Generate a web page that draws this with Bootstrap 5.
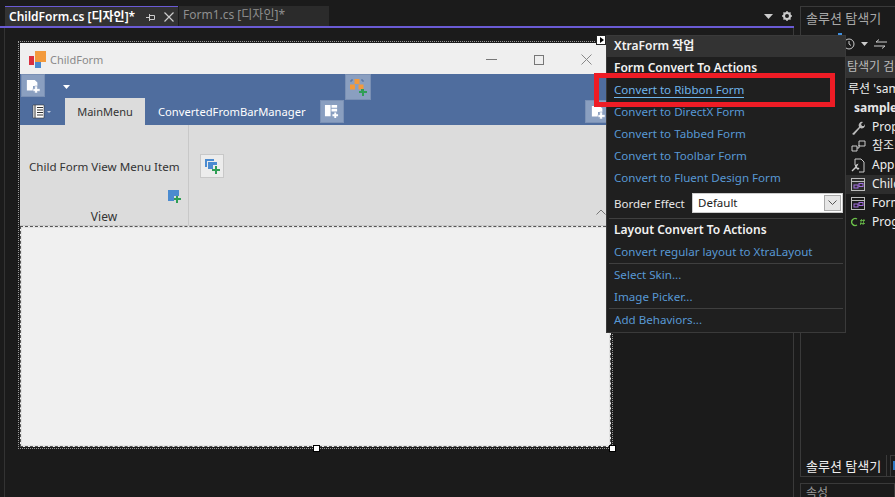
<!DOCTYPE html>
<html lang="ko">
<head>
    <meta charset="UTF-8">
    <title>ChildForm.cs [디자인]</title>
    <link href="https://cdn.jsdelivr.net/npm/bootstrap@5.3.0/dist/css/bootstrap.min.css" rel="stylesheet">
    <style>
        html, body { height: 100%; }
        body {
            background: #1b1b1b;
            color: #e6e6e6;
            font-family: "Noto Sans", "Noto Sans CJK KR", sans-serif;
            font-size: 12px;
            line-height: 1.2;
            overflow: hidden;
        }
        .ide-root { position: relative; width: 895px; height: 497px; }

        /* document column */
        .doc-col { width: 794px; flex: none; }
        .doc-tabs { height: 28px; padding: 6px 0 0 5px; border-bottom: 2px solid #6a5bd4; position: relative; }
        .doc-tab { height: 20px; padding: 0 4px; line-height: 18px; white-space: nowrap; }
        .doc-tab-on { width: 173px; background: #333; border-top: 1px solid #6a5bd4; color: #fff; font-weight: 600; }
        .doc-tab-off { width: 150px; margin-left: 1px; background: #2b2b2b; color: #8f8f8f; }
        .tab-tools { position: absolute; right: 2px; top: 11px; gap: 9px; }
        .canvas-area { height: 469px; margin-left: 4px; border-left: 1px solid #333; border-right: 1px solid #3a3a3a; padding: 13px 0 0 13px; }
        .sel-box { width: 595px; height: 408px; border: 1px dotted #999; padding: 1px; position: relative; }

        /* designed form */
        .form-title { height: 31px; background: #efefef; color: #8a8a8a; padding: 2px 0 0 9px; font-size: 11px; }
        .win-btns { margin-left: auto; width: 106px; margin-right: 19px; }
        .ribbon-top { height: 24px; background: #4f6d9e; padding-left: 1px; position: relative; }
        .ribbon-tabs { height: 27px; background: #4f6d9e; position: relative; }
        .rb-btn { width: 24px; height: 23px; background: #8a9fc0; border: 1px solid #7a90b4; flex: none; }
        .rb-btn-big { width: 26px; height: 26px; margin-left: 275px; margin-bottom: -2px; z-index: 1; }
        .rb-btn-end { width: 26px; margin-left: auto; }
        .qat-caret { margin: 11px 0 0 18px; }
        .tab-menu-icon { margin-left: 12px; }
        .rb-page { width: 80px; height: 27px; background: #dcdcdc; color: #333; margin-left: 13px; font-size: 11px; }
        .rb-page-text { color: #fff; margin: 0 14px 0 13px; white-space: nowrap; font-size: 11.2px; }
        .ribbon-body { height: 101px; background: #dcdcdc; border-bottom: 1px solid #c8c8c8; color: #333; position: relative; }
        .rb-group { width: 169px; border-right: 1px solid #c8c8c8; }
        .rb-item { height: 65px; padding: 35px 0 0 9px; white-space: nowrap; font-size: 11.6px; }
        .rb-group-icon { height: 19px; padding-right: 7px; }
        .rb-group-label { text-align: center; padding-top: 1px; }
        .rb-small { width: 24px; height: 24px; background: #ececec; border: 1px solid #c8c8c8; margin: 29px 0 0 11px; }
        .rb-collapse { position: absolute; right: 5px; bottom: 10px; }
        .client-area { height: 221px; background: #f0f0f0; border: 1px dashed #555; box-shadow: inset 0 0 0 1px #e2e2e2; }

        .sel-handle { position: absolute; width: 7px; height: 7px; background: #fff; border: 1px solid #000; }
        .sel-h1 { left: 294px; bottom: -4px; }
        .sel-h2 { right: -4px; bottom: -4px; }

        /* smart tag popup */
        .smart-btn { position: absolute; left: 596px; top: 35px; width: 10px; height: 10px; background: #fff; border: 1px solid #222; z-index: 3; }
        .smart-btn::after { content: ""; position: absolute; left: 3px; top: 1px; border-left: 4px solid #000; border-top: 3px solid transparent; border-bottom: 3px solid transparent; }
        .smart-pop { position: absolute; left: 606px; top: 35px; width: 240px; height: 298px; background: #1f1f1f; border: 1px solid #3a3a3a; z-index: 2; }
        .smart-head { height: 21px; background: #333; color: #f2f2f2; font-weight: 600; padding: 0 7px; line-height: 20px; }
        .smart-bold { height: 22px; line-height: 22px; padding: 0 7px; color: #f2f2f2; font-weight: 600; }
        .smart-link { display: block; height: 22px; line-height: 22px; padding: 0 7px; color: #5898d4; text-decoration: none; font-size: 11.6px; }
        .smart-link-hot { color: #6fb4ea; }
        .smart-link-hot span { border-bottom: 1px solid #6fb4ea; }
        .smart-rule { height: 1px; background: #3f3f3f; margin: 0 2px; }
        .smart-row { height: 29px; padding: 0 2px 0 7px; font-size: 11.5px; }
        .smart-select { width: 151px; height: 20px; background: #fff; color: #222; border: 1px solid #ccc; margin: 0 0 2px auto; padding-left: 5px; }
        .smart-caret { width: 17px; height: 16px; background: #e6e6e6; border: 1px solid #aaa; margin: 1px 1px 1px auto; }
        .red-mark { position: absolute; left: 594px; top: 73px; width: 241px; height: 34px; border: 5px solid #ee1c25; z-index: 4; }

        /* solution explorer */
        .side-col { margin-left: 6px; flex: 1; min-width: 0; position: relative; overflow: hidden; }
        .side-panel { height: 471px; margin-top: 6px; border: 1px solid #3a3a3a; border-right: 0; overflow: hidden; white-space: nowrap; }
        .side-title { height: 26px; padding: 3px 5px; color: #a8a8a8; line-height: 16px; font-size: 13px; }
        .side-tools { height: 22px; padding-left: 42px; gap: 6px; }
        .side-search { height: 22px; margin: 1px 0 0 44px; padding-left: 2px; background: #333; color: #bbb; line-height: 22px; }
        .side-row { height: 19px; padding-left: 71px; line-height: 18px; position: relative; color: #eee; }
        .side-row svg { position: absolute; left: 50px; top: 2px; }
        .side-sln { height: 18px; padding-left: 47px; margin-top: 2px; }
        .side-sel { background: #2d2d2d; margin-left: 44px; padding-left: 27px; }
        .side-sel svg { left: 6px; }
        .side-root { padding-left: 53px; font-weight: 700; height: 20px; line-height: 19px; }
        .side-mark { position: absolute; left: 38px; top: 33px; width: 4px; height: 2px; background: #3f8fe0; }
        .side-bottom { position: absolute; left: 0; top: 455px; width: 100%; height: 22px; }
        .side-tab { flex: none; width: 87px; height: 22px; border: 1px solid #3a3a3a; border-top: 0; padding: 2px 0 0 5px; color: #eee; line-height: 19px; background: #1b1b1b; font-size: 13px; white-space: nowrap; }
        .side-tab-next { width: 20px; height: 22px; margin-left: 3px; border: 1px solid #3a3a3a; border-bottom: 0; flex: none; }
        .side-tab-next::before { content: ""; display: block; width: 3px; height: 9px; margin: 5px 0 0 2px; background: #2f78c4; }
        .side-props { position: absolute; left: 0; top: 483px; width: 100%; height: 30px; border: 1px solid #3a3a3a; padding: 2px 5px; color: #999; }
    </style>
</head>
<body>

<svg width="0" height="0" class="position-absolute">
    <defs>
        <symbol id="ic-form-add" viewBox="0 0 16 16">
            <path d="M1 1h9l3 3v4H8v5H1z" fill="#fff"/>
            <path d="M10 8h3v3h3v3h-3v2h-3v-2H8v-3h2z" fill="#fff" stroke="#8a9fc0" stroke-width=".6"/>
        </symbol>
        <symbol id="ic-split-add" viewBox="0 0 16 16">
            <path d="M1 1h6v12H1zM8 1h6v3H8zM8 5h6v3H8z" fill="#fff"/>
            <path d="M11 9h2v2h2v2h-2v2h-2v-2H9v-2h2z" fill="#fff"/>
        </symbol>
    </defs>
</svg>

<div class="ide-root d-flex">

    <div class="doc-col">
        <div class="doc-tabs d-flex">
            <div class="doc-tab doc-tab-on d-flex align-items-center">
                <span>ChildForm.cs [디자인]*</span>
                <svg class="ms-auto me-1" width="10" height="10" viewBox="0 0 10 10"><path d="M0 5.500h3M3.500 2v7M3.500 3.500h5v4h-5" fill="none" stroke="#ccc"/></svg>
                <svg class="ms-1" width="10" height="10" viewBox="0 0 10 10"><path d="M.5.5l9 9M9.5.5l-9 9" stroke="#ccc" stroke-width="1.2"/></svg>
            </div>
            <div class="doc-tab doc-tab-off">Form1.cs [디자인]*</div>
            <div class="tab-tools d-flex align-items-center">
                <svg width="9" height="5" viewBox="0 0 9 5"><path d="M0 0h9L4.500 5z" fill="#ccc"/></svg>
                <svg width="10" height="10" viewBox="0 0 10 10"><circle cx="5" cy="5" r="3" fill="none" stroke="#ccc" stroke-width="2"/><path d="M5 0v2M5 8v2M0 5h2M8 5h2M1.500 1.500l1 1M7.500 7.500l1 1M8.500 1.500l-1 1M2.500 7.500l-1 1" stroke="#ccc" stroke-width="1.400"/></svg>
            </div>
        </div>

        <div class="canvas-area">
            <div class="sel-box">
                <div class="form-title d-flex align-items-center">
                    <svg class="me-1" width="17" height="17" viewBox="0 0 17 17">
                        <rect x="0" y="5" width="5" height="9" fill="#d9303f"/>
                        <rect x="6" y="0" width="11" height="11" fill="#f39a3c"/>
                        <rect x="6" y="11" width="6" height="6" fill="#4b8bd0"/>
                    </svg>
                    <span>ChildForm</span>
                    <div class="win-btns d-flex align-items-center justify-content-between">
                        <svg width="11" height="3" viewBox="0 0 11 3"><path d="M0 1.500h11" stroke="#777"/></svg>
                        <svg width="10" height="10" viewBox="0 0 10 10"><rect x=".5" y=".5" width="9" height="9" fill="none" stroke="#777"/></svg>
                        <svg width="11" height="11" viewBox="0 0 11 11"><path d="M.5.5l10 10M10.500.5l-10 10" stroke="#888"/></svg>
                    </div>
                </div>

                <div class="ribbon-top d-flex align-items-start">
                    <div class="rb-btn d-flex align-items-center justify-content-center"><svg width="14" height="14"><use href="#ic-form-add"/></svg></div>
                    <svg class="qat-caret" width="7" height="4" viewBox="0 0 7 4"><path d="M0 0h7L3.500 4z" fill="#fff"/></svg>
                    <div class="rb-btn rb-btn-big d-flex align-items-center justify-content-center">
                        <svg width="18" height="18" viewBox="0 0 18 18">
                            <path d="M2 4V2h2M12 2h2v2" fill="none" stroke="#4f6d9e"/>
                            <rect x="5.500" y="1" width="5" height="5" fill="#f39a3c"/>
                            <rect x="1" y="6.500" width="5" height="5" fill="#f39a3c"/>
                            <rect x="9.500" y="6.500" width="5" height="5" fill="#f39a3c"/>
                            <path d="M12 11h3v2h3v2h-3v3h-2v-3h-3v-2h2z" fill="#2f9e55"/>
                        </svg>
                    </div>
                </div>

                <div class="ribbon-tabs d-flex align-items-center">
                    <svg class="tab-menu-icon" width="20" height="15" viewBox="0 0 20 15">
                        <path d="M1 1h11v13H1z" fill="#fff" stroke="#333" stroke-width=".6"/>
                        <path d="M3 1v13M5 3.500h6M5 6h6M5 8.500h6M5 11h6" stroke="#333"/>
                        <path d="M15 7h4l-2 2z" fill="#c4cede"/>
                    </svg>
                    <div class="rb-page d-flex align-items-center justify-content-center">MainMenu</div>
                    <div class="rb-page-text">ConvertedFromBarManager</div>
                    <div class="rb-btn d-flex align-items-center justify-content-center"><svg width="15" height="15"><use href="#ic-split-add"/></svg></div>
                    <div class="rb-btn rb-btn-end d-flex align-items-center justify-content-center"><svg width="14" height="14"><use href="#ic-form-add"/></svg></div>
                </div>

                <div class="ribbon-body d-flex">
                    <div class="rb-group">
                        <div class="rb-item">Child Form View Menu Item</div>
                        <div class="rb-group-icon d-flex justify-content-end">
                            <svg width="13" height="13" viewBox="0 0 13 13">
                                <path d="M0 0h11v6H6v5H0z" fill="#4b8bd0"/>
                                <path d="M8 6h2v2h3v2h-3v3H8v-3H6V8h2z" fill="#2f9e55"/>
                            </svg>
                        </div>
                        <div class="rb-group-label">View</div>
                    </div>
                    <div class="rb-small d-flex align-items-center justify-content-center">
                        <svg width="15" height="15" viewBox="0 0 15 15">
                            <path d="M0 0h9v2H2v6H0z" fill="#4b8bd0"/>
                            <path d="M3 3h9v3H8v4H3z" fill="#4b8bd0"/>
                            <path d="M10 7h2v3h3v2h-3v3h-2v-3H7v-2h3z" fill="#2f9e55"/>
                        </svg>
                    </div>
                    <svg class="rb-collapse" width="10" height="6" viewBox="0 0 10 6"><path d="M.5 5.500L5 1l4.500 4.500" fill="none" stroke="#777"/></svg>
                </div>

                <div class="client-area"></div>

                <div class="sel-handle sel-h1"></div>
                <div class="sel-handle sel-h2"></div>
            </div>
        </div>
    </div>

    <div class="side-col">
        <div class="side-mark"></div>
        <div class="side-panel">
            <div class="side-title">솔루션 탐색기</div>
            <div class="side-tools d-flex align-items-center">
                <svg width="12" height="12" viewBox="0 0 12 12"><circle cx="6" cy="6" r="5" fill="none" stroke="#ccc"/><path d="M6 3v3l2 1.500" fill="none" stroke="#ccc"/></svg>
                <svg width="7" height="4" viewBox="0 0 7 4"><path d="M0 0h7L3.500 4z" fill="#ccc"/></svg>
                <svg width="13" height="10" viewBox="0 0 13 10"><path d="M13 3H2l3-2.500M0 7h11L8 9.500" fill="none" stroke="#ccc"/></svg>
            </div>
            <div class="side-search">탐색기 검색</div>
            <div class="side-row side-sln">루션 'sample'</div>
            <div class="side-root">sample</div>
            <div class="side-row">
                <svg width="15" height="15" viewBox="0 0 15 15"><path d="M1 14l7-7a3.500 3.500 0 0 1 4-5l-2 2 1 2 2 0 1-2a3.500 3.500 0 0 1-5 4l-6 7z" fill="#bbb"/></svg>Properties
            </div>
            <div class="side-row">
                <svg width="15" height="15" viewBox="0 0 15 15"><path d="M8 2h6v5H8zM1 7h5v5H1zM6 9h2V6" fill="none" stroke="#ccc"/></svg>참조
            </div>
            <div class="side-row">
                <svg width="15" height="15" viewBox="0 0 15 15"><path d="M4 7V1h6l3 3v10H8" fill="none" stroke="#ccc"/><path d="M1 13l4-4 1-2-2 1M5 9l2 2 1-1" fill="none" stroke="#ccc" stroke-width="1.400"/></svg>App.config
            </div>
            <div class="side-row side-sel">
                <svg width="15" height="15" viewBox="0 0 15 15"><rect x=".5" y="1.500" width="13" height="12" fill="none" stroke="#bbb"/><path d="M1 4.500h12" stroke="#bbb"/><rect x="3" y="8" width="4" height="3" fill="none" stroke="#a46fe0"/><rect x="8" y="6.500" width="4" height="3" fill="none" stroke="#a46fe0"/></svg>ChildForm.cs
            </div>
            <div class="side-row">
                <svg width="15" height="15" viewBox="0 0 15 15"><rect x=".5" y="1.500" width="13" height="12" fill="none" stroke="#bbb"/><path d="M1 4.500h12" stroke="#bbb"/><rect x="3" y="8" width="4" height="3" fill="none" stroke="#a46fe0"/><rect x="8" y="6.500" width="4" height="3" fill="none" stroke="#a46fe0"/></svg>Form1.cs
            </div>
            <div class="side-row">
                <svg width="15" height="15" viewBox="0 0 15 15"><path d="M6 4a3.500 3.500 0 1 0 0 6" fill="none" stroke="#6cc24a" stroke-width="1.400"/><path d="M9 5.500h5M9 8.500h5M10.500 4l-1 6M13 4l-1 6" stroke="#6cc24a" stroke-width=".8"/></svg>Program.cs
            </div>
        </div>
        <div class="side-bottom d-flex">
            <div class="side-tab">솔루션 탐색기</div>
            <div class="side-tab-next"></div>
        </div>
        <div class="side-props">속성</div>
    </div>

    <div class="smart-btn"></div>

    <div class="smart-pop">
        <div class="smart-head">XtraForm 작업</div>
        <div class="smart-bold">Form Convert To Actions</div>
        <a class="smart-link smart-link-hot" href="#"><span>Convert to Ribbon Form</span></a>
        <a class="smart-link" href="#">Convert to DirectX Form</a>
        <a class="smart-link" href="#">Convert to Tabbed Form</a>
        <a class="smart-link" href="#">Convert to Toolbar Form</a>
        <a class="smart-link" href="#">Convert to Fluent Design Form</a>
        <div class="smart-row d-flex align-items-center">
            <span>Border Effect</span>
            <div class="smart-select d-flex align-items-center">
                <span>Default</span>
                <div class="smart-caret d-flex align-items-center justify-content-center">
                    <svg width="9" height="5" viewBox="0 0 9 5"><path d="M.5.500l4 4 4-4" fill="none" stroke="#555"/></svg>
                </div>
            </div>
        </div>
        <div class="smart-rule"></div>
        <div class="smart-bold">Layout Convert To Actions</div>
        <a class="smart-link" href="#">Convert regular layout to XtraLayout</a>
        <div class="smart-rule"></div>
        <a class="smart-link" href="#">Select Skin...</a>
        <a class="smart-link" href="#">Image Picker...</a>
        <div class="smart-rule"></div>
        <a class="smart-link" href="#">Add Behaviors...</a>
    </div>

    <div class="red-mark"></div>
</div>

<script src="https://cdn.jsdelivr.net/npm/bootstrap@5.3.0/dist/js/bootstrap.bundle.min.js"></script>
</body>
</html>
